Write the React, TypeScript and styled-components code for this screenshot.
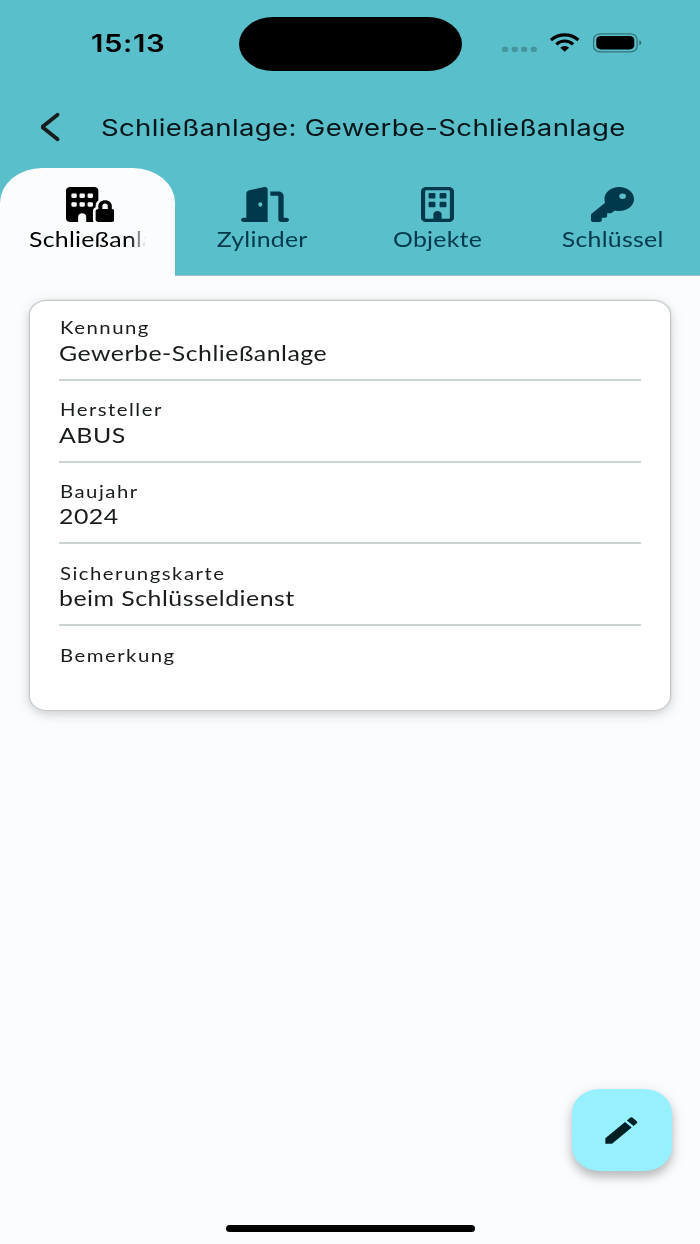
import React from "react";
import styled, { createGlobalStyle } from "styled-components";
import { FaBuildingLock, FaDoorOpen, FaKey, FaRegBuilding } from "react-icons/fa6";
import { MdEdit } from "react-icons/md";

const GlobalStyle = createGlobalStyle`
  * { box-sizing: border-box; }
  body { margin: 0; background: #fbfcfe; }
`;

const Screen = styled.div`
  width: 700px;
  height: 1244px;
  display: flex;
  flex-direction: column;
  background: #fbfcfe;
  font-family: Lato, "Liberation Sans", sans-serif;
  color: #191c1d;
  overflow: hidden;
`;

const Header = styled.header`
  height: 276px;
  flex: none;
  background: #59bfca;
  box-shadow: inset 0 -1px 0 #9fc0c4;
  display: flex;
  flex-direction: column;
`;

const StatusBar = styled.div`
  height: 86px;
  flex: none;
  display: grid;
  grid-template-columns: 238.5px 223px 238.5px;
  align-items: center;
`;

/* Text drawn with the wide proportions of the display. */
const Wide = styled.span<{ $origin?: string }>`
  display: inline-block;
  white-space: nowrap;
  transform: scaleX(1.22);
  transform-origin: ${(p) => p.$origin ?? "left"} center;
`;

const Clock = styled.div`
  padding: 1px 0 0 90.7px;
  font: 600 24px/28px Inter, "Liberation Sans", sans-serif;
  letter-spacing: 0.5px;
  color: #000;
`;

const Island = styled.div`
  height: 54px;
  margin-top: 1px;
  border-radius: 34px / 27px;
  background: #000;
`;

const StatusIcons = styled.div`
  display: flex;
  align-items: center;
  padding-left: 39.5px;

  svg { display: block; }
`;

const TitleBar = styled.div`
  height: 82px;
  flex: none;
  display: flex;
  align-items: center;
  padding-left: 38.5px;
`;

const BackIcon = styled.svg`
  width: 22px;
  height: 30px;
  flex: none;
`;

const Title = styled.h1`
  margin: 1px 0 0 40.5px;
  font: 400 22.6px/30px Inter, "Liberation Sans", sans-serif;
  letter-spacing: 0.28px;
  color: #051517;
`;

const Tabs = styled.nav`
  display: grid;
  grid-template-columns: repeat(4, 175px);
  height: 108px;
  flex: none;
`;

const Tab = styled.div<{ $active?: boolean }>`
  display: flex;
  flex-direction: column;
  align-items: center;
  padding-top: 19px;
  color: ${(p) => (p.$active ? "#000" : "#00394b")};
  background: ${(p) => (p.$active ? "#fbfcfe" : "transparent")};
  border-radius: 42px 42px 0 0 / 35px 35px 0 0;

  svg { display: block; height: 35px; flex: none; }
`;

const TabLabel = styled.div<{ $clipped?: boolean }>`
  width: 117px;
  margin-top: 3.5px;
  font-size: 20.4px;
  line-height: 26px;
  letter-spacing: 0.2px;
  display: flex;
  justify-content: ${(p) => (p.$clipped ? "flex-start" : "center")};
  ${(p) =>
    p.$clipped &&
    `overflow: hidden;
     -webkit-mask-image: linear-gradient(to right, #000 86%, transparent 100%);
     mask-image: linear-gradient(to right, #000 86%, transparent 100%);`}
`;

const Content = styled.main`
  flex: 1;
  padding: 24px 29px 0;
`;

const Card = styled.section`
  height: 411px;
  padding: 0 29px;
  background: #fff;
  border: 1px solid #c4c8c9;
  border-radius: 18px / 15px;
  box-shadow: 0 0 0 0.5px #d5d8d9, 0 3px 8px rgba(0, 0, 0, 0.13), 0 3px 18px rgba(0, 0, 0, 0.07);
`;

const Field = styled.div`
  padding: 19.4px 0 12.4px;
  border-bottom: 2px solid #ccd3d5;

  &:first-child { padding-top: 17.4px; }
  &:last-child { border-bottom: 0; }
`;

const FieldLabel = styled.div`
  padding-left: 0.6px;
  font-size: 16.7px;
  line-height: 20px;
  letter-spacing: 1.22px;
`;

const FieldValue = styled.div`
  margin-top: 1.5px;
  height: 26.5px;
  font-size: 20.4px;
  line-height: 27px;
  letter-spacing: 0.4px;
`;

const Footer = styled.footer`
  display: flex;
  flex-direction: column;
  align-items: center;
`;

const EditButton = styled.button`
  align-self: flex-end;
  width: 100px;
  height: 82px;
  margin: 0 28.5px 54px 0;
  padding: 0;
  border: 0;
  border-radius: 28px / 24px;
  background: #97f0ff;
  color: #001f24;
  display: flex;
  align-items: center;
  justify-content: center;
  box-shadow: 0 6px 8px rgba(0, 0, 0, 0.18), 0 4px 16px rgba(0, 0, 0, 0.13);
`;

const HomeIndicator = styled.div`
  width: 249px;
  height: 7px;
  margin-bottom: 12px;
  border-radius: 4px;
  background: #000;
`;

const tabs = [
  { label: "Schließanlage", Icon: FaBuildingLock, width: 48.5, shift: 5, active: true },
  { label: "Zylinder", Icon: FaDoorOpen, width: 48, shift: 5 },
  { label: "Objekte", Icon: FaRegBuilding, width: 33, shift: 0 },
  { label: "Schlüssel", Icon: FaKey, width: 43, shift: 0 },
];

const fields = [
  ["Kennung", "Gewerbe-Schließanlage"],
  ["Hersteller", "ABUS"],
  ["Baujahr", "2024"],
  ["Sicherungskarte", "beim Schlüsseldienst"],
  ["Bemerkung", ""],
];

function StatusGlyphs() {
  return (
    <StatusIcons>
      <svg width="142" height="24" viewBox="0 0 142 24">
        <g fill="#000" fillOpacity="0.22">
          {[1, 10.6, 20, 29.7].map((x) => (
            <rect key={x} x={x} y="15.8" width="6.2" height="5.2" rx="2" />
          ))}
        </g>
        <g fill="none" stroke="#000" strokeWidth="3.1">
          <path d="M50 9C58 2.200 69.400 2.200 77.400 9" />
          <path d="M55.300 13.300C60.200 8.900 67.200 8.900 72.100 13.300" />
        </g>
        <path d="M59.300 16.700C62 14.400 65.400 14.400 68.100 16.700L63.700 20.700Z" fill="#000" />
        <rect x="92.600" y="2.800" width="43.500" height="18" rx="6.500" ry="5.500" fill="none" stroke="#000" strokeOpacity="0.4" strokeWidth="1.300" />
        <rect x="95.300" y="5" width="38" height="13.400" rx="4.500" ry="3.800" />
        <path d="M138.300 9.300C141 10 141 13.600 138.300 14.300Z" fillOpacity="0.45" />
      </svg>
    </StatusIcons>
  );
}

export default function App() {
  return (
    <Screen>
      <GlobalStyle />
      <Header>
        <StatusBar>
          <Clock><Wide>15:13</Wide></Clock>
          <Island />
          <StatusGlyphs />
        </StatusBar>
        <TitleBar>
          <BackIcon viewBox="0 0 22 30">
            <path d="M18.600 2.800L3.200 15L18.600 27.200" fill="none" stroke="#191c1d" strokeWidth="3.800" strokeLinecap="round" strokeLinejoin="bevel" />
          </BackIcon>
          <Title><Wide>Schließanlage: Gewerbe-Schließanlage</Wide></Title>
        </TitleBar>
        <Tabs>
          {tabs.map(({ label, Icon, width, shift, active }) => (
            <Tab key={label} $active={active}>
              <Icon preserveAspectRatio="none" style={{ width, marginLeft: shift }} />
              <TabLabel $clipped={active}>
                <Wide $origin={active ? "left" : "center"}>{label}</Wide>
              </TabLabel>
            </Tab>
          ))}
        </Tabs>
      </Header>
      <Content>
        <Card>
          {fields.map(([label, value]) => (
            <Field key={label}>
              <FieldLabel><Wide>{label}</Wide></FieldLabel>
              <FieldValue><Wide>{value}</Wide></FieldValue>
            </Field>
          ))}
        </Card>
      </Content>
      <Footer>
        <EditButton aria-label="Bearbeiten">
          <MdEdit preserveAspectRatio="none" style={{ width: 42.7, height: 35 }} />
        </EditButton>
        <HomeIndicator />
      </Footer>
    </Screen>
  );
}
